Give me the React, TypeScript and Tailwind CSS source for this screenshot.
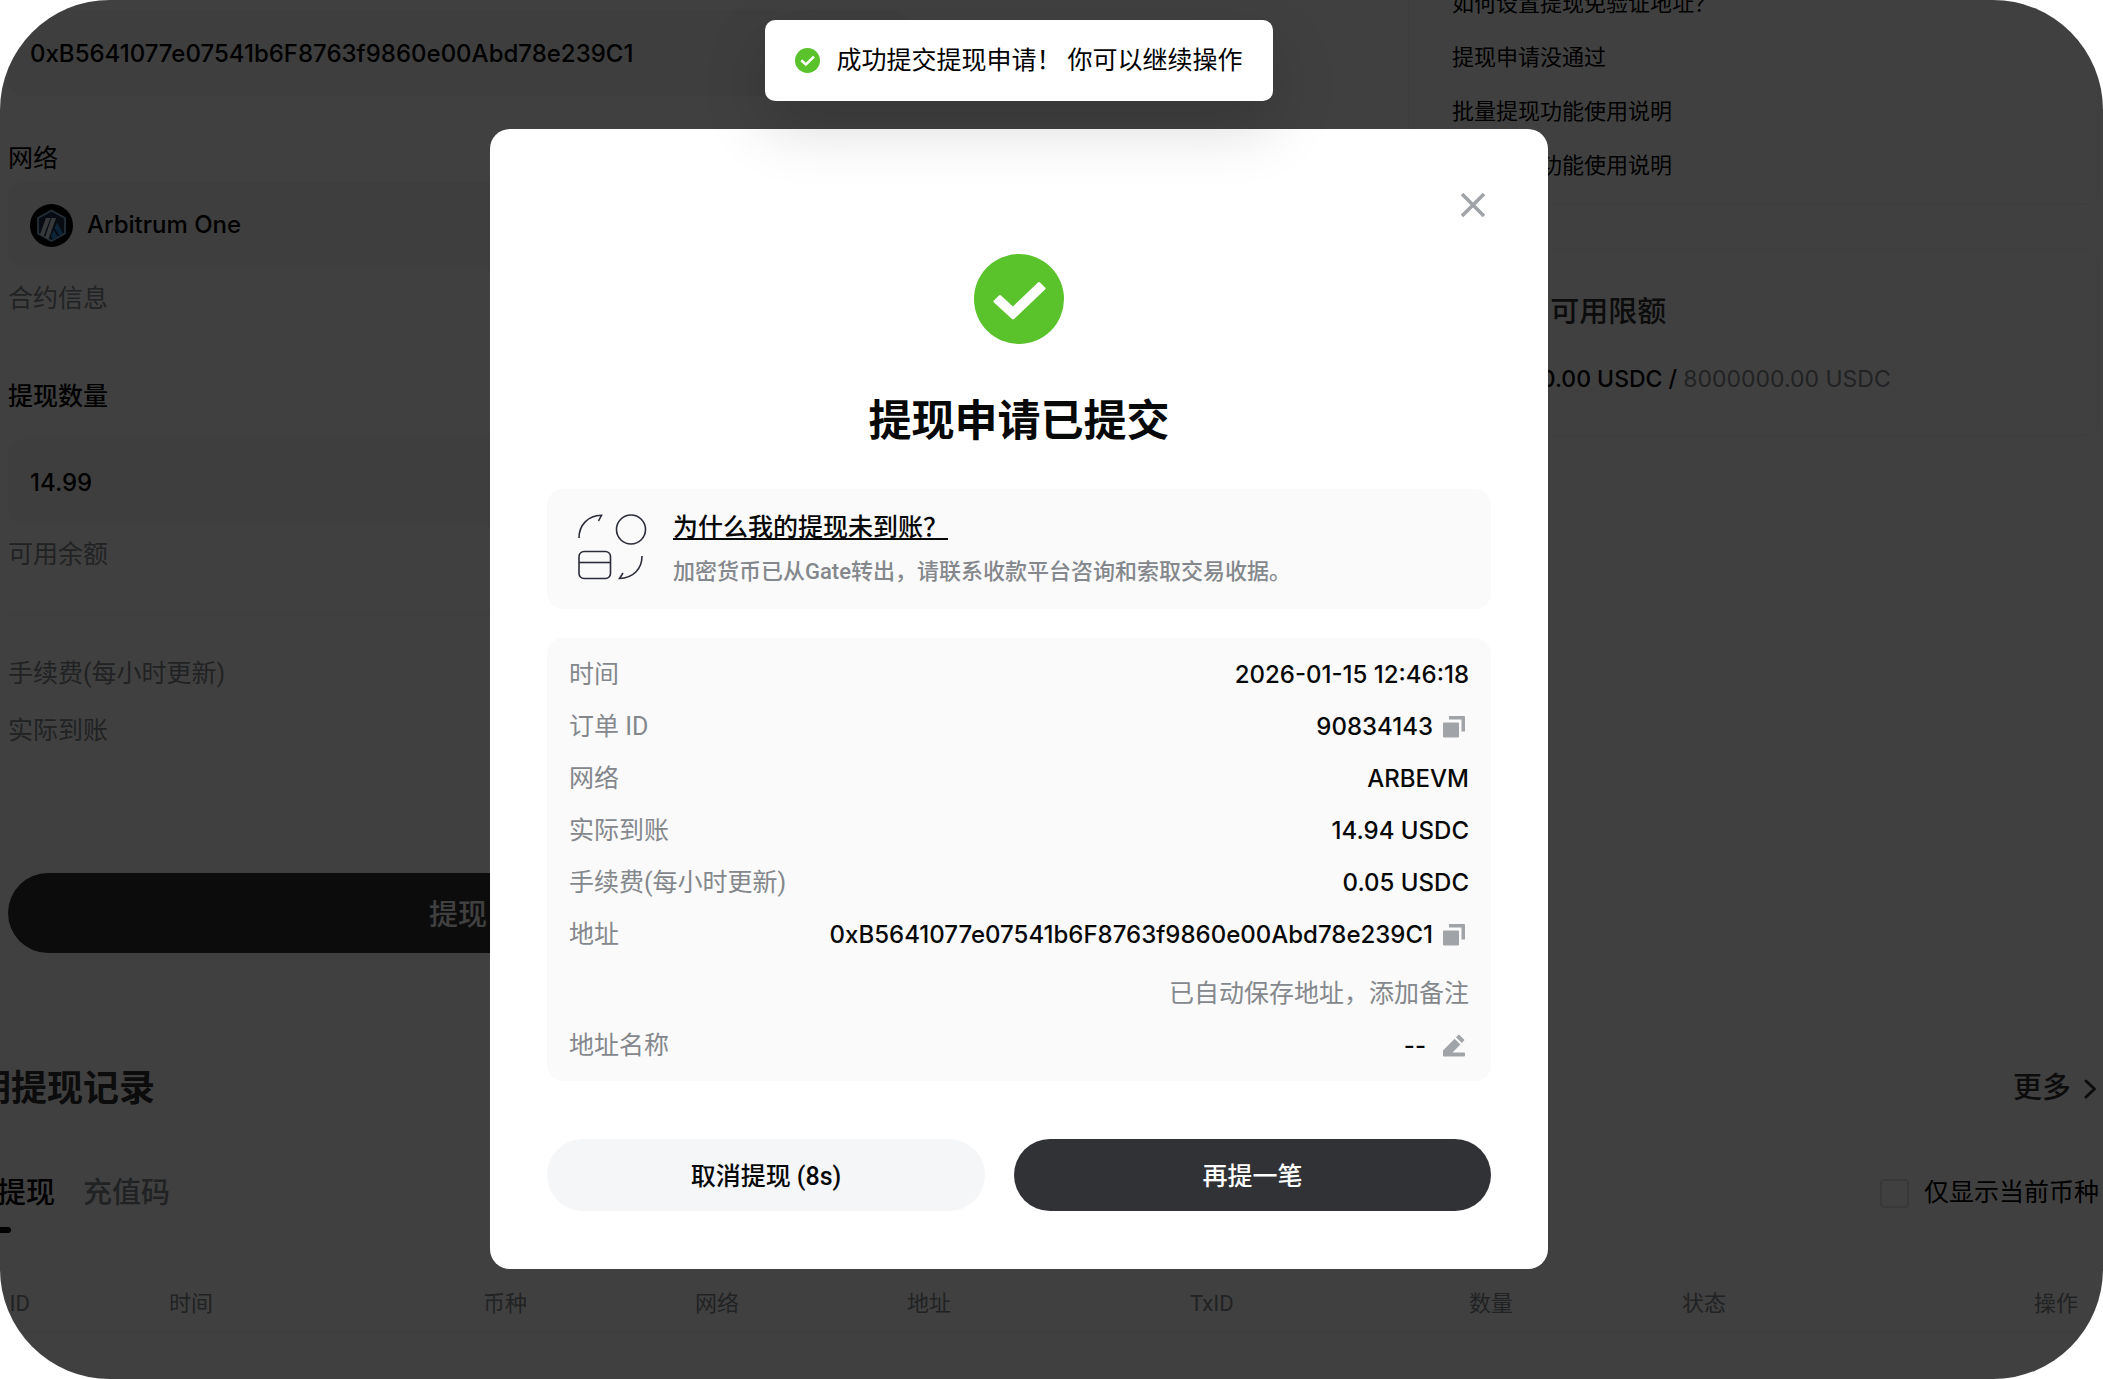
import React from "react";

const address = "0xB5641077e07541b6F8763f9860e00Abd78e239C1";

const faqs = [
    "如何设置提现免验证地址？",
    "提现申请没通过",
    "批量提现功能使用说明",
    "批量充值功能使用说明",
];

function CheckCircle({ className }: { className: string }) {
    return (
        <svg viewBox="0 0 90 90" className={className} aria-hidden="true">
            <circle cx="45" cy="45" r="45" fill="#5ac22a" />
            <path
                d="M26 42.5 L39 54.5 L65 29.5 L70 34.5 L39 64 L21 47.5 Z"
                fill="#fff"
                stroke="#fff"
                strokeWidth="3"
                strokeLinejoin="round"
            />
        </svg>
    );
}

function ArbitrumLogo() {
    return (
        <svg viewBox="0 0 43 43" className="size-[43px] shrink-0" aria-hidden="true">
            <circle cx="21.5" cy="21.5" r="21.5" fill="#000" />
            <path
                d="M21.5 6.5 L35 14 V29.5 L21.5 37 L8 29.5 V14 Z"
                fill="#213147"
                stroke="#8db8da"
                strokeWidth="1.8"
                strokeLinejoin="round"
            />
            <path d="M24.5 24 L27 18.5 L33 29.5 L29.5 32 Z" fill="#2f8fdc" />
            <path d="M21 32 L23.500 26 L28 33 L23 36 Z" fill="#2f8fdc" />
            <path d="M16 14 H20.500 L13.500 32.500 L10 30.500 Z" fill="#dde1e8" />
            <path d="M21.500 14 H26 L18.500 35 L15 33.500 Z" fill="#dde1e8" />
        </svg>
    );
}

function CopyButton({ label }: { label: string }) {
    return (
        <button aria-label={label} className="ml-[7px] cursor-pointer">
            <svg viewBox="0 0 29 29" className="size-[29px]" fill="#a0a3a7" aria-hidden="true">
                <rect x="3" y="9.5" width="16" height="15" rx="0.8" />
                <path d="M9 3 H24 a1 1 0 0 1 1 1 V18.5 H21.5 V6.5 H9 Z" />
            </svg>
        </button>
    );
}

function Row({ label, children }: { label: string; children: React.ReactNode }) {
    return (
        <div className="flex items-center justify-between h-[52px]">
            <dt className="text-[#84888c]">{label}</dt>
            <dd className="flex items-center font-[Inter,sans-serif] text-2xl font-medium text-[#070808]">
                {children}
            </dd>
        </div>
    );
}

function WithdrawForm() {
    return (
        <form className="w-[900px] ml-[69px] pt-8 text-[25px] leading-[38px]">
            <input
                aria-label="提现地址"
                defaultValue={address}
                className="block w-full h-[86px] px-[22px] rounded-2xl bg-[#f5f5f5] font-[Inter,sans-serif] text-2xl font-medium"
            />
            <p className="mt-11">网络</p>
            <button
                type="button"
                className="mt-1 w-full h-[86px] px-[22px] rounded-2xl bg-[#f5f5f5] flex items-center gap-3.5 font-[Inter,sans-serif] text-2xl font-medium"
            >
                <ArbitrumLogo />
                Arbitrum One
            </button>
            <p className="mt-3 text-[#84888c]">合约信息</p>
            <label htmlFor="amount" className="block mt-[60px] font-medium">
                提现数量
            </label>
            <input
                id="amount"
                defaultValue="14.99"
                className="block mt-[23px] w-full h-[86px] px-[22px] rounded-2xl bg-[#f5f5f5] font-[Inter,sans-serif] text-2xl font-medium"
            />
            <p className="mt-[11px] text-[#84888c]">可用余额</p>
            <hr className="mt-10 border-[#f2f2f2]" />
            <p className="mt-10 text-[#84888c]">手续费(每小时更新)</p>
            <p className="mt-[19px] text-[#84888c]">实际到账</p>
            <button
                type="button"
                className="mt-[123px] w-full h-20 pt-1 rounded-full bg-[#303236] text-white text-[29px] font-medium"
            >
                提现
            </button>
        </form>
    );
}

function Sidebar() {
    return (
        <aside className="w-[691px] -mt-0.5">
            <ul className="border border-t-0 border-[#f2f2f2] rounded-b-2xl px-[43px] pb-3 text-[22px]">
                {faqs.map((faq) => (
                    <li key={faq} className="h-[54px] flex items-center">
                        <a href="#faq">{faq}</a>
                    </li>
                ))}
            </ul>
            <div className="mt-11 h-[187px] border border-[#f2f2f2] rounded-2xl px-[43px] pt-10">
                <h3 className="text-[29px] leading-[44px] font-medium text-[#303236]">24小时 可用限额</h3>
                <p className="mt-[26px] font-[Inter,sans-serif] text-[23px] leading-[38px] font-medium">
                    8000000.00 USDC / <span className="font-normal text-[#84888c]">8000000.00 USDC</span>
                </p>
            </div>
        </aside>
    );
}

function Records() {
    return (
        <section className="mt-[109px]">
            <div className="flex items-center justify-between h-[54px]">
                <h2 className="text-4xl font-bold text-[#303236]">近期提现记录</h2>
                <a href="#more" className="flex items-center gap-3 text-[29px] font-medium text-[#303236]">
                    更多
                    <svg viewBox="0 0 16 20" className="w-4 h-5" fill="none" aria-hidden="true">
                        <path
                            d="M3 2 L11.5 10 L3 18"
                            stroke="currentColor"
                            strokeWidth="3"
                            strokeLinecap="round"
                            strokeLinejoin="round"
                        />
                    </svg>
                </a>
            </div>
            <div className="mt-[55px] flex justify-between">
                <div className="flex gap-7 text-[29px] leading-[44px] font-medium">
                    <button className="flex flex-col items-center">
                        链上提现
                        <span className="mt-3 w-7 h-1.5 rounded-sm bg-black" />
                    </button>
                    <button className="self-start text-[#84888c]">充值码</button>
                </div>
                <label className="flex items-center self-start gap-[15px] h-11 text-[25px]">
                    <input type="checkbox" className="appearance-none size-[29px] rounded border-2 border-[#dedede]" />
                    仅显示当前币种
                </label>
            </div>
            <table className="mt-[43px] w-full table-fixed text-[22px] text-[#84888c]">
                <thead>
                    <tr className="h-14 border-b border-[#f2f2f2] text-left *:px-[21px] *:font-normal">
                        <th className="w-[209px]">订单 ID</th>
                        <th className="w-[314px]">时间</th>
                        <th className="w-[212px]">币种</th>
                        <th className="w-[212px]">网络</th>
                        <th className="w-[283px]">地址</th>
                        <th className="w-[279px]">TxID</th>
                        <th className="w-[213px]">数量</th>
                        <th>状态</th>
                        <th className="text-right">操作</th>
                    </tr>
                </thead>
            </table>
        </section>
    );
}

function SuccessDialog() {
    return (
        <div
            role="dialog"
            aria-modal="true"
            aria-labelledby="dialog-title"
            className="w-[1058px] px-[57px] pt-[60px] pb-[58px] rounded-[20px] bg-white text-[25px]"
        >
            <div className="flex justify-end">
                <button aria-label="关闭" className="w-9 h-8 flex items-center justify-center">
                    <svg viewBox="0 0 24 24" className="size-6" aria-hidden="true">
                        <path d="M1 1 L23 23 M23 1 L1 23" stroke="#a0a3a7" strokeWidth="3.6" />
                    </svg>
                </button>
            </div>
            <CheckCircle className="block mt-[33px] mx-auto size-[90px]" />
            <h1 id="dialog-title" className="mt-[47px] text-center text-[43px] leading-[60px] font-bold text-[#070808]">
                提现申请已提交
            </h1>

            <div className="mt-[38px] h-[120px] px-[23px] rounded-2xl bg-[#fafafa] flex items-center gap-[17px]">
                <svg
                    viewBox="0 0 86 86"
                    className="size-[86px] shrink-0"
                    fill="none"
                    stroke="#2b2d3a"
                    strokeWidth="1.6"
                    aria-hidden="true"
                >
                    <path d="M9 32 C9 19 18 9.5 31.5 9.3 L28.5 15" />
                    <circle cx="61" cy="23.5" r="14.5" />
                    <rect x="9" y="45.5" width="31.5" height="27" rx="5" />
                    <path d="M9 56.5 H40.5" />
                    <path d="M72 50 C72 63 63 72.3 49.5 72.5 L53 67" />
                </svg>
                <div>
                    <a href="#why" className="block leading-10 font-medium text-[#070808] underline">
                        为什么我的提现未到账？
                    </a>
                    <p className="mt-1.5 text-[22px] leading-9 font-medium text-[#84888c]">
                        加密货币已从Gate转出，请联系收款平台咨询和索取交易收据。
                    </p>
                </div>
            </div>

            <dl className="mt-[29px] px-[22px] pt-[11px] pb-[9px] rounded-2xl bg-[#fafafa]">
                <Row label="时间">2026-01-15 12:46:18</Row>
                <Row label="订单 ID">
                    90834143
                    <CopyButton label="复制订单 ID" />
                </Row>
                <Row label="网络">ARBEVM</Row>
                <Row label="实际到账">14.94 USDC</Row>
                <Row label="手续费(每小时更新)">0.05 USDC</Row>
                <Row label="地址">
                    {address}
                    <CopyButton label="复制地址" />
                </Row>
                <dd className="mt-[7px] h-[52px] flex items-center justify-end text-[#84888c]">
                    已自动保存地址，添加备注
                </dd>
                <Row label="地址名称">
                    --
                    <button aria-label="编辑地址名称" className="ml-3.5">
                        <svg viewBox="0 0 29 29" className="size-[29px]" fill="#a0a3a7" aria-hidden="true">
                            <path d="M19 2.5 L24.5 8 L21.8 11 L16 5.3 Z" />
                            <path d="M14.7 6.7 L20.4 12.4 L12.5 20.500 H24 a1 1 0 0 1 1 1 V23.500 a1 1 0 0 1 -1 1 H4 a1 1 0 0 1 -1 -1 V18.500 Z" />
                        </svg>
                    </button>
                </Row>
            </dl>

            <div className="mt-[58px] flex gap-[29px] *:h-[72px] *:pt-1 *:rounded-full font-medium">
                <button className="w-[438px] bg-[#f5f6f8] text-[#070808]">取消提现 (8s)</button>
                <button className="flex-1 bg-[#303236] text-white">再提一笔</button>
            </div>
        </div>
    );
}

export default function App() {
    return (
        <div className="overflow-hidden min-h-screen rounded-[110px] bg-white text-black font-[Roboto,'Noto_Sans_CJK_SC',sans-serif]">
            <div className="relative flow-root min-h-screen -ml-[65px]">
                <main className="-mt-[22px] px-1">
                    <div className="flex justify-between items-start">
                        <WithdrawForm />
                        <Sidebar />
                    </div>
                    <Records />
                </main>

                <div className="absolute inset-0 bg-black/75 flex justify-center items-start pt-[129px]">
                    <SuccessDialog />
                </div>

                <div className="absolute inset-x-0 top-5 flex justify-center">
                    <div
                        role="status"
                        className="h-[81px] px-[30px] rounded-[10px] bg-white shadow-[0_24px_64px_rgba(0,0,0,0.16)] flex items-center gap-4 text-[25px]"
                    >
                        <CheckCircle className="size-[25px]" />
                        成功提交提现申请！ 你可以继续操作
                    </div>
                </div>
            </div>
        </div>
    );
}
